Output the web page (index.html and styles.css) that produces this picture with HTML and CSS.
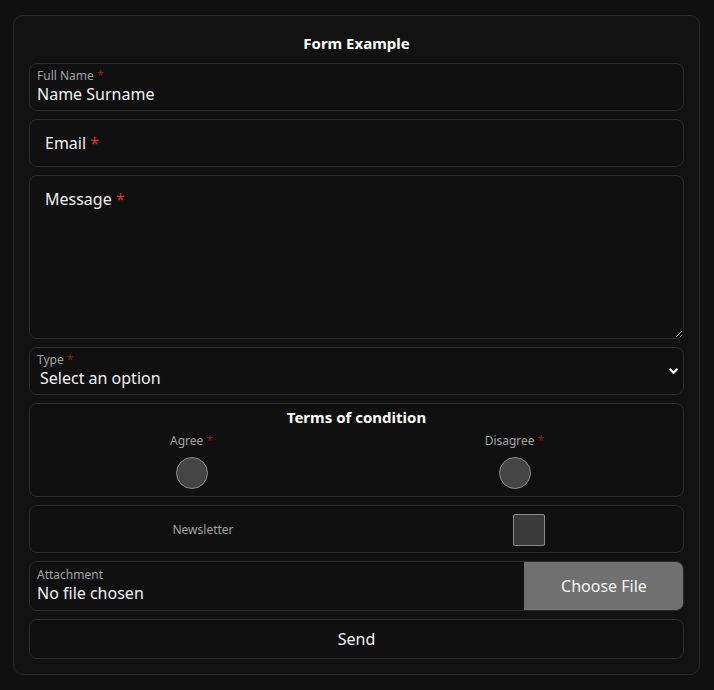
FILE: index.html
```html
<!DOCTYPE html>
<html>
<head>
    <title>Form Example</title>
    <meta name="viewport" content="width=device-width, initial-scale=1.0">
    <link rel="stylesheet" href="styles.css">
</head>
<body>
    <form class="form-card">
        <div class="form-title">Form Example</div>

        <!-- Filled text field -->
        <label class="field field-filled">
            <span class="field-label">Full Name <span class="req">*</span></span>
            <input class="field-input" type="text" value="Name Surname">
        </label>

        <!-- Empty text field -->
        <label class="field field-empty">
            <input class="field-input" type="email">
            <span class="field-placeholder">Email <span class="req-strong">*</span></span>
        </label>

        <label class="field field-area">
            <textarea class="field-textarea"></textarea>
            <span class="field-placeholder">Message <span class="req-strong">*</span></span>
        </label>

        <label class="field field-filled field-select">
            <span class="field-label">Type <span class="req">*</span></span>
            <span class="select-value">Select an option</span>
            <svg class="chevron" width="11" height="8" viewBox="0 0 11 8">
                <path d="M1.5 1.8 L5.5 5.8 L9.5 1.8" fill="none" stroke="#fff" stroke-width="2.2"/>
            </svg>
        </label>

        <div class="field field-terms">
            <div class="terms-title">Terms of condition</div>
            <div class="terms-options">
                <label class="option">
                    <span class="option-label">Agree <span class="req">*</span></span>
                    <input class="radio" type="radio" name="terms">
                </label>
                <label class="option">
                    <span class="option-label">Disagree <span class="req">*</span></span>
                    <input class="radio" type="radio" name="terms">
                </label>
            </div>
        </div>

        <label class="field field-check">
            <span class="option-label">Newsletter</span>
            <span class="check-cell"><input class="checkbox" type="checkbox"></span>
        </label>

        <label class="field field-file">
            <span class="file-text">
                <span class="field-label">Attachment</span>
                <span class="file-value">No file chosen</span>
            </span>
            <span class="file-btn">Choose File</span>
        </label>

        <button class="send-btn" type="button">Send</button>
    </form>
</body>
</html>
```

FILE: styles.css
```css
* {
    box-sizing: border-box;
}
body {
    margin: 15px 14px 16px 13px;
    background: #111;
    font-family: 'Noto Sans', 'Open Sans', sans-serif;
    color: #f2f2f2;
}
.form-card {
    background: #121212;
    border: 1px solid #2a2a2a;
    border-radius: 10px;
    padding: 15px;
    display: flex;
    flex-direction: column;
    gap: 8px;
}
.form-title {
    text-align: center;
    font-size: 15px;
    font-weight: 700;
    line-height: 24px;
    color: #fff;
}
.field {
    position: relative;
    display: flex;
    flex-direction: column;
    background: #101010;
    border: 1px solid #2b2b2b;
    border-radius: 8px;
    height: 48px;
}
.field-filled {
    padding: 4px 7px 0;
}
.field-label {
    font-size: 12px;
    line-height: 15px;
    color: #a3a3a3;
}
.req {
    color: #7e2424;
}
.req-strong {
    color: #d83434;
}
.field-input {
    background: transparent;
    border: none;
    outline: none;
    padding: 0;
    font-family: inherit;
    font-size: 16px;
    line-height: 22px;
    color: #f2f2f2;
    width: 100%;
}
.field-empty .field-input {
    height: 100%;
    padding: 0 15px;
}
.field-placeholder {
    position: absolute;
    left: 15px;
    top: 12px;
    font-size: 16px;
    line-height: 22px;
    color: #f2f2f2;
    pointer-events: none;
}
.field-area {
    height: 164px;
}
.field-textarea {
    background: transparent;
    border: none;
    outline: none;
    width: 100%;
    height: 100%;
    resize: vertical;
    color: #f2f2f2;
    font-family: inherit;
    font-size: 16px;
    padding: 12px 15px;
}
.select-value {
    font-size: 16px;
    line-height: 22px;
    padding-left: 3px;
}
.chevron {
    position: absolute;
    right: 4px;
    top: 19px;
}
.field-terms {
    height: 94px;
    padding-top: 3px;
}
.terms-title {
    text-align: center;
    font-size: 15px;
    font-weight: 700;
    line-height: 20px;
    color: #fff;
}
.terms-options {
    display: grid;
    grid-template-columns: 1fr 1fr;
    padding: 6px 7px 0 0;
}
.option {
    display: flex;
    flex-direction: column;
    align-items: center;
    gap: 8px;
}
.option-label {
    font-size: 12px;
    line-height: 16px;
    color: #a3a3a3;
}
.radio {
    appearance: none;
    -webkit-appearance: none;
    margin: 0;
    width: 32px;
    height: 32px;
    border-radius: 50%;
    background: #454545;
    border: 1px solid #8a8a8a;
}
.field-check {
    display: grid;
    grid-template-columns: 326px 326px;
    align-items: center;
    padding: 1px 0 0 10px;
    text-align: center;
}
.check-cell {
    display: flex;
    justify-content: center;
}
.checkbox {
    appearance: none;
    -webkit-appearance: none;
    margin: 0;
    width: 32px;
    height: 32px;
    border-radius: 2px;
    background: #3a3a3a;
    border: 1px solid #8a8a8a;
}
.field-file {
    flex-direction: row;
    height: 50px;
    overflow: hidden;
}
.file-text {
    flex: 1;
    display: flex;
    flex-direction: column;
    padding: 5px 7px 0;
}
.file-value {
    font-size: 16px;
    line-height: 23px;
}
.file-btn {
    width: 160px;
    background: #707070;
    display: flex;
    align-items: center;
    justify-content: center;
    font-size: 16px;
    color: #f4f4f4;
    margin: -1px -1px -1px 0;
    border-radius: 0 8px 8px 0;
}
.send-btn {
    height: 40px;
    background: #101010;
    border: 1px solid #2b2b2b;
    border-radius: 8px;
    font-family: inherit;
    font-size: 16px;
    color: #f2f2f2;
    cursor: pointer;
}
```
